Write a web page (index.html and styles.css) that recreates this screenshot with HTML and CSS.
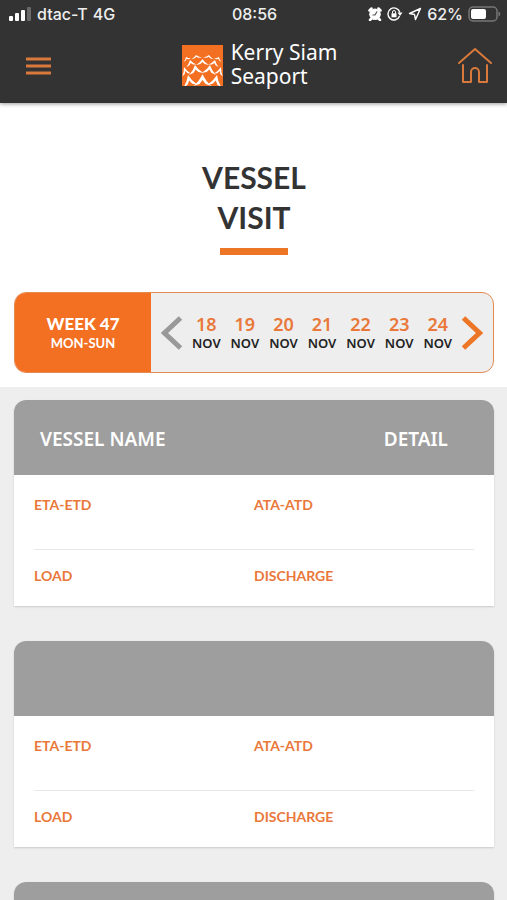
FILE: index.html
```html
<!DOCTYPE html>
<html lang="en">
<head>
<meta charset="utf-8">
<meta name="viewport" content="width=device-width, initial-scale=1">
<title>Vessel Visit</title>
<link rel="stylesheet" href="styles.css">
</head>
<body>
<header class="top">
  <div class="status">
    <div class="status-side">
      <svg class="signal" width="24" height="14" viewBox="0 0 24 14" aria-hidden="true"><g fill="#fff"><rect x="1" y="9" width="4" height="5" rx="1"/><rect x="7" y="6" width="4" height="8" rx="1"/><rect x="13" y="3" width="4" height="11" rx="1"/></g><rect x="19" y="0" width="4" height="14" rx="1" fill="#6a6a6a"/></svg>
      <span>dtac-T</span><span>4G</span>
    </div>
    <span class="clock">08:56</span>
    <div class="status-side status-right">
      <svg width="14" height="14" viewBox="0 0 14 14" aria-hidden="true"><circle cx="7" cy="7.300" r="5.800" fill="#fff"/><path d="M1.500 3.500 3.500 1.500M12.500 3.500 10.500 1.500M3 12l-1 1M11 12l1 1" stroke="#fff" stroke-width="2.500" stroke-linecap="round"/><path d="M9 4.500 7 8H4.500" fill="none" stroke="#555" stroke-width="1.200"/></svg>
      <svg class="lock" width="16" height="14" viewBox="0 0 16 14" aria-hidden="true"><path d="M12.800 5.500A6 6 0 1 0 12.600 9" fill="none" stroke="#fff" stroke-width="1.400"/><path d="M10.500 5.500h5L13 9z" fill="#fff"/><rect x="4.500" y="6.300" width="5" height="4" fill="#fff"/><path d="M5.500 6.500V5a1.500 1.500 0 0 1 3 0v1.500" fill="none" stroke="#fff"/></svg>
      <svg class="arrow" width="14" height="14" viewBox="0 0 14 14" aria-hidden="true"><path d="M12.500 1.500 1.500 6.500l5 1 1 5z" fill="none" stroke="#fff" stroke-width="1.400" stroke-linejoin="round"/></svg>
      <span>62%</span>
      <svg class="battery" width="33" height="16" viewBox="0 0 33 16" aria-hidden="true"><rect x="1" y="1" width="28" height="14" rx="4" fill="none" stroke="#777" stroke-width="1.500"/><rect x="3" y="3" width="15" height="10" rx="2" fill="#fff"/><path d="M30.500 5.500a2.600 2.600 0 0 1 0 5z" fill="#777"/></svg>
    </div>
  </div>
  <nav class="bar">
    <button class="icon-button" type="button" aria-label="Menu"><svg width="25" height="18" viewBox="0 0 25 18"><path d="M0 2h25M0 9h25M0 16h25" stroke="#d9793c" stroke-width="3"/></svg></button>
    <a class="brand" href="#">
      <svg width="41" height="41" viewBox="0 0 41 41" aria-hidden="true">
        <defs><path id="bird" d="M0 0Q3 7 9 12L3 10 0 6-3 10-9 12Q-3 7 0 0z"/></defs>
        <rect width="41" height="41" fill="#f36f21"/>
        <g fill="#fff">
          <use href="#bird" transform="translate(20.500 29)"/>
          <use href="#bird" transform="translate(6 30) rotate(-12) scale(.8 .95)"/>
          <use href="#bird" transform="translate(35 30) rotate(12) scale(.8 .95)"/>
          <use href="#bird" transform="translate(13 20) rotate(-8) scale(.8 .75)"/>
          <use href="#bird" transform="translate(28 20) rotate(8) scale(.8 .75)"/>
          <use href="#bird" transform="translate(2 22) rotate(-18) scale(.5 .7)"/>
          <use href="#bird" transform="translate(39 22) rotate(18) scale(.5 .7)"/>
          <use href="#bird" transform="translate(20.500 14) scale(.7 .5)"/>
          <use href="#bird" transform="translate(8 15) rotate(-14) scale(.6 .5)"/>
          <use href="#bird" transform="translate(33 15) rotate(14) scale(.6 .5)"/>
          <use href="#bird" transform="translate(14 10) rotate(-10) scale(.6 .3)"/>
          <use href="#bird" transform="translate(27 10) rotate(10) scale(.6 .3)"/>
          <use href="#bird" transform="translate(4 12) rotate(-24) scale(.45 .3)"/>
          <use href="#bird" transform="translate(37 12) rotate(24) scale(.45 .3)"/>
        </g>
      </svg>
      <span class="brand-name">Kerry Siam<br>Seaport</span>
    </a>
    <a class="home" href="#" aria-label="Home"><svg width="36" height="37" viewBox="0 0 36 37"><path d="M2 16 18 2l16 14M6 18v17h8V25a4 4 0 0 1 8 0v10h8V18" fill="none" stroke="#d9793c" stroke-width="2" stroke-linejoin="round" stroke-linecap="round"/></svg></a>
  </nav>
</header>
<main>
  <section class="intro">
    <h1>VESSEL<br>VISIT</h1>
    <div class="week">
      <div class="week-label"><strong>WEEK 47</strong><span>MON-SUN</span></div>
      <div class="week-days">
        <button class="step" type="button" aria-label="Previous week"><svg width="22" height="34" viewBox="0 0 22 34"><path d="M19.500 2 3.500 17l16 15" fill="none" stroke="#999" stroke-width="5"/></svg></button>
        <ol class="days">
          <li><b>18</b>NOV</li><li><b>19</b>NOV</li><li><b>20</b>NOV</li><li><b>21</b>NOV</li><li><b>22</b>NOV</li><li><b>23</b>NOV</li><li><b>24</b>NOV</li>
        </ol>
        <button class="step" type="button" aria-label="Next week"><svg width="22" height="34" viewBox="0 0 22 34"><path d="M2.500 2l16 15-16 15" fill="none" stroke="#ec7526" stroke-width="5"/></svg></button>
      </div>
    </div>
  </section>
  <section class="visits">
    <article class="card">
      <h2 class="card-head"><span>VESSEL NAME</span><span>DETAIL</span></h2>
      <dl class="card-body"><div class="row"><dt>ETA-ETD</dt><dt>ATA-ATD</dt></div><div class="row"><dt>LOAD</dt><dt>DISCHARGE</dt></div></dl>
    </article>
    <article class="card">
      <div class="card-head"></div>
      <dl class="card-body"><div class="row"><dt>ETA-ETD</dt><dt>ATA-ATD</dt></div><div class="row"><dt>LOAD</dt><dt>DISCHARGE</dt></div></dl>
    </article>
    <article class="card">
      <div class="card-head"></div>
    </article>
  </section>
</main>
</body>
</html>
```
FILE: styles.css
```css
* { box-sizing: border-box; }
body {
  display: flex;
  flex-direction: column;
  margin: 0;
  height: 100vh;
  overflow: hidden;
  background: #eee;
  color: #333;
  font-family: Lato, sans-serif;
}
main { flex: 1; min-height: 0; overflow: hidden; }
button { padding: 0; border: 0; background: none; }
svg { display: block; flex: none; }
h1, h2, ol, dl { margin: 0; padding: 0; }

.top {
  position: relative;
  flex: none;
  background: #333;
  color: #fff;
  box-shadow: 0 1px 4px rgba(0, 0, 0, 0.4);
}
.status {
  display: grid;
  grid-template-columns: 1fr auto 1fr;
  align-items: center;
  height: 28px;
  padding: 0 6px 0 8px;
  color: #eee;
  font: 500 16px/28px Inter, sans-serif;
}
.status-side { display: flex; align-items: center; gap: 5px; }
.status-right { justify-content: flex-end; }
.bar {
  display: grid;
  grid-template-columns: 1fr auto 1fr;
  align-items: center;
  height: 75px;
  padding: 0 14px 0 26px;
}
.icon-button { justify-self: start; }
.brand {
  display: flex;
  align-items: center;
  gap: 8px;
  color: #fff;
  font: 21px/24px "Noto Sans", sans-serif;
  text-decoration: none;
}
.brand-name { padding-bottom: 4px; }
.home { justify-self: end; }

.intro { padding: 54px 13px 14px 14px; background: #fff; }
h1 {
  font-size: 30px;
  line-height: 40px;
  text-align: center;
}
h1::after {
  content: "";
  display: block;
  width: 68px;
  height: 7px;
  margin: 11px auto 37px;
  background: #ec7526;
}
.week {
  display: flex;
  height: 81px;
  overflow: hidden;
  border: 1px solid #e58a50;
  border-radius: 12px;
  background: #eee;
}
.week-label {
  display: flex;
  flex: 0 0 136px;
  flex-direction: column;
  align-items: center;
  justify-content: center;
  background: #f36f21;
  color: #fff;
  font-size: 13px;
  font-weight: 700;
  line-height: 18px;
}
.week-label strong { font-size: 17px; line-height: 20px; }
.week-days {
  display: flex;
  flex: 1;
  align-items: center;
  gap: 4px;
  padding: 0 10px;
}
.days {
  display: flex;
  flex: 1;
  list-style: none;
  color: #222;
  font: 600 13px/18px "Noto Sans", sans-serif;
  text-align: center;
}
.days li { flex: 1; }
.days b { display: block; color: #e9783a; font-size: 18px; font-weight: 600; line-height: 20px; }

.visits { padding: 13px 13px 13px 14px; }
.card {
  margin-bottom: 35px;
  overflow: hidden;
  border-radius: 12px 12px 0 0;
  background: #fff;
  box-shadow: 0 1px 2px rgba(0, 0, 0, 0.15);
}
.card-head {
  display: flex;
  align-items: center;
  justify-content: space-between;
  height: 75px;
  padding: 2px 46px 0 26px;
  background: #9e9e9e;
  color: #fff;
  font: 600 19px/24px "Noto Sans", sans-serif;
}
.card-body { padding: 0 20px; }
.row {
  display: grid;
  grid-template-columns: 1fr 1fr;
  height: 56px;
  padding-top: 16px;
  color: #e9783a;
  font-size: 14px;
  font-weight: 700;
  line-height: 20px;
}
.row:first-child { height: 75px; padding-top: 20px; border-bottom: 1px solid #e8e8e8; }
```
